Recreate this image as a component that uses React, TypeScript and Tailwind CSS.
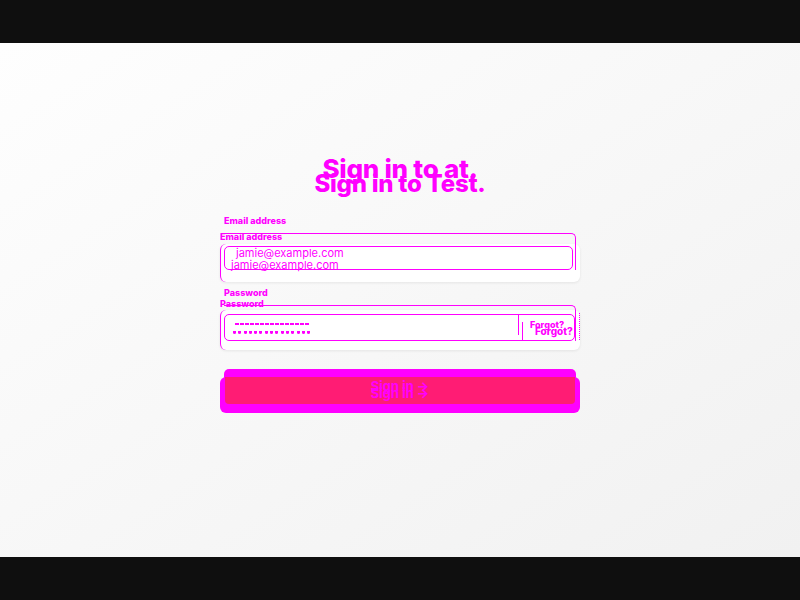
const M = "text-[#ff00ff]";

function Dashes() {
  return (
    <div className="flex gap-[1px]">
      {Array.from({ length: 15 }).map((_, i) => (
        <span key={i} className="block w-[4px] h-[2px] bg-[#ff00ff]" />
      ))}
    </div>
  );
}

function Dots() {
  return (
    <div className="flex gap-[2.3px]">
      {Array.from({ length: 15 }).map((_, i) => (
        <span key={i} className="block w-[3px] h-[3px] rounded-b-full bg-[#ff00ff]" />
      ))}
    </div>
  );
}

// back render: "Test." version
function LayerB() {
  return (
    <div className="col-start-1 row-start-1 flex flex-col items-center">
      <h1 className={`relative z-10 mt-[125px] text-[24px] leading-[32px] font-extrabold tracking-[-0.01em] ${M}`}>Sign in to Test.</h1>
      <div className="w-[360px] mt-[31px]">
        <div className={`relative z-10 text-[9px] leading-[12px] font-extrabold ${M}`}>Email address</div>
        <div className="mt-[1px] h-[38px] bg-white rounded-[6px] border-l border-[#ff00ff] shadow-[0_1px_3px_rgba(0,0,0,0.08)]">
          <div className={`relative z-10 pl-[10px] pt-[15px] text-[11px] leading-[12px] ${M}`}>jamie@example.com</div>
        </div>

        <div className={`relative z-10 mt-[16px] text-[9px] leading-[12px] font-extrabold ${M}`}>Password</div>
        <div className="h-[40px] flex bg-white rounded-[6px] border-l border-[#ff00ff] shadow-[0_1px_3px_rgba(0,0,0,0.08)]">
          <div className="relative z-10 flex-1 pl-[12px] pt-[21px]">
            <Dots />
          </div>
          <div className="relative z-10 w-px h-[19px] mt-[12px] bg-[#ff00ff]" />
          <div className={`relative z-10 w-[56px] pl-[12px] pt-[15px] text-[10px] leading-[12px] font-extrabold ${M}`}>Forgot?</div>
          <div className="w-px h-[27px] mt-[3px] border-r border-dotted border-[#ff00ff]" />
        </div>

        <div className="mt-[27px] h-[36px] bg-[#ff00ff] rounded-[6px]">
          <div className={`relative z-10 pt-[10px] text-center text-[13px] leading-[12px] font-bold ${M}`}>Sign in →</div>
        </div>
      </div>
    </div>
  );
}

// front render: "at." version
function LayerA() {
  return (
    <div className="col-start-1 row-start-1 flex flex-col items-center">
      <h1 className={`mt-[110px] text-[26px] leading-[32px] font-extrabold tracking-[-0.01em] ${M}`}>Sign in to at.</h1>
      <div className="w-[352px] mt-[30px]">
        <div className={`text-[9px] leading-[12px] font-extrabold ${M}`}>Email address</div>
        <div className="mt-[6px] h-[37px] border-t border-r border-[#ff00ff] rounded-tr-[5px]">
          <div className={`mt-[12px] mr-[2px] h-[24px] border border-[#ff00ff] rounded-[5px] pl-[11px] text-[11px] leading-[12px] ${M}`}>
            jamie@example.com
          </div>
        </div>

        <div className={`mt-[17px] text-[9px] leading-[12px] font-extrabold ${M}`}>Password</div>
        <div className="mt-[6px] h-[36px] border-t border-r border-[#ff00ff] rounded-tr-[5px]">
          <div className="mt-[8px] h-[27px] flex border border-[#ff00ff] rounded-[5px]">
            <div className="flex-1 pl-[10px] pt-[8px]">
              <Dashes />
            </div>
            <div className="w-px h-[20px] bg-[#ff00ff]" />
            <div className={`w-[55px] pl-[11px] pt-[4px] text-[9px] leading-[12px] font-extrabold ${M}`}>Forgot?</div>
          </div>
        </div>

        <div className="mt-[28px] h-[35px] bg-[#ff00ff] rounded-[5px] pt-[8px] px-[1px]">
          <div className={`h-[27px] bg-[#ff1c74] rounded-b-[4px] pt-[3px] text-center text-[13px] leading-[12px] font-bold ${M}`}>
            Sign in →
          </div>
        </div>
      </div>
    </div>
  );
}

export default function App() {
  return (
    <div className="w-[800px] h-[600px] flex flex-col font-['Inter',sans-serif]">
      <div className="h-[43px] bg-[#0f0f0f]" />
      <main className="h-[514px] grid bg-gradient-to-br from-[#fefefe] to-[#f1f1f1] overflow-hidden">
        <LayerB />
        <LayerA />
      </main>
      <div className="h-[43px] bg-[#0f0f0f]" />
    </div>
  );
}
